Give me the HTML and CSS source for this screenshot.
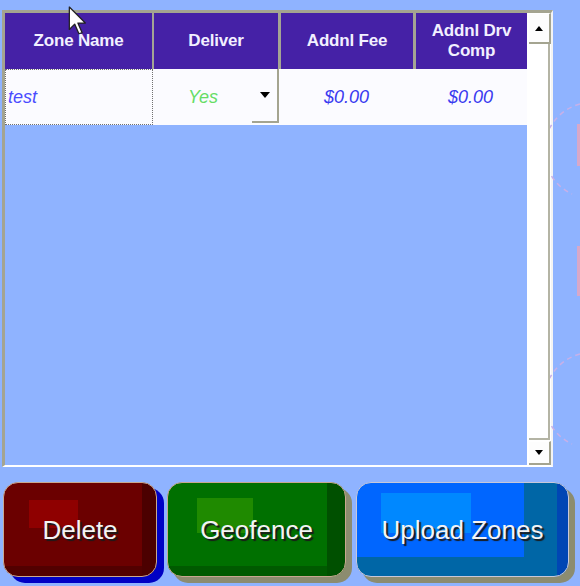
FILE: index.html
```html
<!DOCTYPE html>
<html>
<head>
<meta charset="utf-8">
<link rel="stylesheet" href="styles.css">
</head>
<body>
<div class="screen">
  <svg class="deco" width="30" height="586" viewBox="0 0 30 586">
    <path d="M30 104 A48 48 0 0 0 22 194" fill="none" stroke="#c8b0e8" stroke-width="1.5" stroke-dasharray="5 4"/>
    <path d="M30 354 A48 48 0 0 0 22 444" fill="none" stroke="#c8b0e8" stroke-width="1.5" stroke-dasharray="5 4"/>
    <rect x="27" y="124" width="3" height="42" fill="#d8a8c8"/>
    <rect x="27" y="246" width="3" height="50" fill="#d8a8c8"/>
  </svg>
  <div class="panel">
    <div class="grid">
      <div class="head">
        <div class="hc c1">Zone Name</div>
        <div class="hc c2">Deliver</div>
        <div class="hc c3">Addnl Fee</div>
        <div class="hc c4">Addnl Drv<br>Comp</div>
      </div>
      <div class="row">
        <div class="cell c1 focus"><span class="t-name">test</span></div>
        <div class="cell c2 deliver">
          <span class="t-yes">Yes</span>
          <span class="drop"><span class="tri down"></span></span>
        </div>
        <div class="cell c3 money">$0.00</div>
        <div class="cell c4 money">$0.00</div>
      </div>
      <div class="empty"></div>
    </div>
    <div class="scroll">
      <div class="sbtn up"><span class="tri up-tri"></span></div>
      <div class="track"></div>
      <div class="sbtn dn"><span class="tri down small"></span></div>
    </div>
  </div>
  <div class="buttons">
    <div class="btn delete">Delete</div>
    <div class="btn geofence">Geofence</div>
    <div class="btn upload">Upload Zones</div>
  </div>
  <svg class="cursor" width="24" height="32" viewBox="0 0 22 30">
    <path d="M1 1 L1 22 L6 17 L10 26 L13 25 L9 16 L16 16 Z" fill="#fff" stroke="#222" stroke-width="1.2" stroke-linejoin="round"/>
  </svg>
</div>
</body>
</html>
```

FILE: styles.css
```css
html, body {
  margin: 0;
  padding: 0;
}
body {
  background: #8fb3ff;
  font-family: "Liberation Sans", Arial, sans-serif;
  width: 580px;
  height: 586px;
  overflow: hidden;
}
.screen {
  position: relative;
  width: 580px;
  height: 586px;
  padding: 10px 0 0 2px;
  box-sizing: border-box;
}
.deco {
  position: absolute;
  right: 0;
  top: 0;
}
.cursor {
  position: absolute;
  left: 68px;
  top: 6px;
}
.panel {
  width: 546px;
  height: 452px;
  display: flex;
  border-top: 3px solid #a4a490;
  border-left: 3px solid #a4a490;
  border-right: 2px solid #f4f4f4;
  border-bottom: 2px solid #ffffff;
  background: #fff;
}
.grid {
  width: 522px;
  display: flex;
  flex-direction: column;
  background: #8fb3ff;
}
.head {
  display: flex;
  height: 56px;
  background: #a4a494;
}
.hc {
  background: #4521a6;
  color: #f2f0ff;
  font-weight: bold;
  font-size: 17px;
  line-height: 20px;
  letter-spacing: -0.2px;
  display: flex;
  align-items: center;
  justify-content: center;
  text-align: center;
}
.c1 { width: 147px; }
.c2 { width: 124px; margin-left: 2px; }
.c3 { width: 132px; margin-left: 3px; }
.c4 { width: 111px; margin-left: 3px; }
.head .hc.c4 { padding-bottom: 1px; }
.row {
  display: flex;
  height: 56px;
  background: #fbfbff;
}
.cell {
  display: flex;
  align-items: center;
  font-style: italic;
  font-size: 18px;
  box-sizing: border-box;
}
.row .c2, .row .c3, .row .c4 { margin-left: 0; }
.row .c1 { width: 148px; }
.row .c2 { width: 126px; }
.row .c3 { width: 135px; }
.row .c4 { width: 113px; }
.focus {
  border: 1px dotted #707070;
  padding-left: 2px;
}
.t-name { color: #4a4cff; }
.deliver {
  position: relative;
  justify-content: center;
}
.t-yes {
  color: #66dd66;
  margin-right: 26px;
}
.drop {
  position: absolute;
  right: 0;
  top: 0;
  bottom: 2px;
  width: 25px;
  border-right: 2px solid #a4a490;
  border-bottom: 2px solid #a4a490;
  display: flex;
  align-items: center;
  justify-content: center;
}
.money {
  justify-content: center;
  color: #3b3bf0;
}
.empty {
  flex: 1;
}
.tri {
  width: 0;
  height: 0;
  border-left: 5px solid transparent;
  border-right: 5px solid transparent;
}
.tri.down {
  border-top: 6px solid #000;
}
.tri.down.small, .tri.up-tri {
  border-left-width: 4px;
  border-right-width: 4px;
}
.tri.down.small { border-top-width: 5px; }
.tri.up-tri {
  border-bottom: 5px solid #000;
}
.scroll {
  width: 24px;
  display: flex;
  flex-direction: column;
  background: #fff;
  padding-left: 2px;
  box-sizing: border-box;
}
.sbtn {
  display: flex;
  align-items: center;
  justify-content: center;
  border-right: 2px solid #a4a490;
  border-bottom: 2px solid #a4a490;
  border-top: 1px solid #fff;
  background: #fdfdfd;
}
.sbtn.up { height: 28px; }
.sbtn.dn { height: 21px; }
.track {
  flex: 1;
  border-right: 2px solid #b4b4a4;
  margin-right: 1px;
  border-bottom: 2px solid #b4b4a4;
  margin-bottom: 1px;
}
.buttons {
  display: flex;
  margin-top: 15px;
  gap: 10px;
  padding-left: 1px;
}
.btn {
  height: 95px;
  box-sizing: border-box;
  border-radius: 15px;
  border: 1px solid #c8a890;
  color: #f4f4f4;
  font-size: 26px;
  text-shadow: 2px 2px 1px #1a1a1a;
  display: flex;
  align-items: center;
  justify-content: center;
  padding-top: 2px;
  background-repeat: no-repeat;
}
.delete {
  width: 154px;
  background-color: #6b0000;
  background-image:
    linear-gradient(to left, #4c0000 14px, transparent 14px),
    linear-gradient(to top, #520000 10px, transparent 10px),
    linear-gradient(#8f0000, #8f0000);
  background-size: 100% 100%, 100% 100%, 49px 28px;
  background-position: 0 0, 0 0, 25px 17px;
  box-shadow: 7px 6px 0 #0000c4;
}
.geofence {
  width: 179px;
  background-color: #007000;
  background-image:
    linear-gradient(to left, #005000 18px, transparent 18px),
    linear-gradient(to top, #005a00 10px, transparent 10px),
    linear-gradient(#1f8a00, #1f8a00);
  background-size: 100% 100%, 100% 100%, 56px 35px;
  background-position: 0 0, 0 0, 29px 15px;
  box-shadow: 6px 6px 0 #8c8c70;
}
.upload {
  width: 213px;
  border-color: #c8c8d8;
  background-color: #0066ff;
  background-image:
    linear-gradient(to left, #0046b4 11px, transparent 11px),
    linear-gradient(to left, #0066a6 44px, transparent 44px),
    linear-gradient(to top, #0066a6 19px, transparent 19px),
    linear-gradient(#0088ff, #0088ff);
  background-size: 100% 100%, 100% 100%, 100% 100%, 90px 40px;
  background-position: 0 0, 0 0, 0 0, 24px 10px;
  box-shadow: 6px 6px 0 #8c8c70;
}
```
